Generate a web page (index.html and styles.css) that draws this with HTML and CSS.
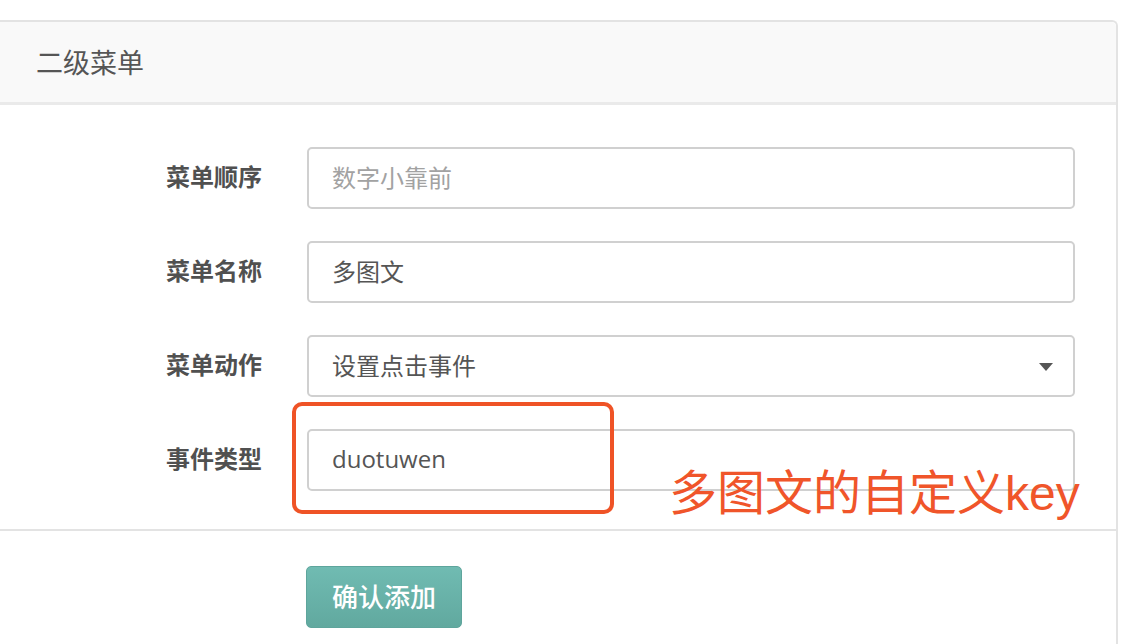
FILE: index.html
```html
<!DOCTYPE html>
<html lang="zh-CN">
<head>
<meta charset="utf-8">
<title>二级菜单</title>
<link rel="stylesheet" href="styles.css">
</head>
<body>
<div class="panel">
  <div class="panel-heading">二级菜单</div>
  <div class="panel-body">
    <div class="row">
      <label class="label">菜单顺序</label>
      <div class="control placeholder">数字小靠前</div>
    </div>
    <div class="row">
      <label class="label">菜单名称</label>
      <div class="control">多图文</div>
    </div>
    <div class="row">
      <label class="label">菜单动作</label>
      <div class="control select">设置点击事件<span class="caret"></span></div>
    </div>
    <div class="row">
      <label class="label">事件类型</label>
      <div class="control latin">duotuwen</div>
      <div class="highlight"></div>
      <div class="note">多图文的自定义<span class="note-latin">key</span></div>
    </div>
  </div>
  <div class="panel-footer">
    <button class="btn">确认添加</button>
  </div>
</div>
</body>
</html>
```
FILE: styles.css
```css
html, body {
  margin: 0;
  padding: 0;
  background: #ffffff;
}
body {
  font-family: "Noto Sans CJK SC", "Noto Sans", sans-serif;
  color: #555555;
  overflow: hidden;
  height: 644px;
}
.panel {
  margin: 20px 28px 0 -2px;
  border: 2px solid #e3e3e3;
  border-bottom: none;
  border-radius: 0 6px 0 0;
  height: 640px;
}
.panel-heading {
  height: 83px;
  box-sizing: border-box;
  padding-left: 36px;
  padding-bottom: 2px;
  display: flex;
  align-items: center;
  background: #f9f9f9;
  border-bottom: 3px solid #eaeaea;
  border-radius: 0 5px 0 0;
  font-size: 27px;
  color: #555555;
  line-height: 1;
}
.panel-body {
  padding: 42px 0 38px 0;
  display: flex;
  flex-direction: column;
  gap: 32px;
}
.row {
  position: relative;
  display: grid;
  grid-template-columns: 262px 768px;
  column-gap: 45px;
  align-items: center;
}
.label {
  text-align: right;
  font-weight: 700;
  font-size: 24px;
  color: #505050;
  line-height: 1;
  padding-bottom: 5px;
}
.control {
  height: 62px;
  box-sizing: border-box;
  border: 2px solid #d0d0d0;
  border-radius: 5px;
  padding: 0 23px 2px 23px;
  display: flex;
  align-items: center;
  font-size: 24px;
  color: #555555;
  line-height: 1;
  background: #fff;
}
.placeholder {
  color: #a2a2a2;
}
.latin {
  font-family: "Open Sans", "Noto Sans", sans-serif;
  font-size: 24px;
}
.select {
  position: relative;
}
.caret {
  position: absolute;
  right: 20px;
  top: 26px;
  width: 0;
  height: 0;
  border-left: 7px solid transparent;
  border-right: 7px solid transparent;
  border-top: 8px solid #555555;
}
.highlight {
  position: absolute;
  left: 292px;
  top: -27px;
  width: 322px;
  height: 112px;
  box-sizing: border-box;
  border: 4px solid #ef5326;
  border-radius: 10px;
}
.note {
  position: absolute;
  left: 669px;
  top: 36px;
  font-size: 48px;
  line-height: 1;
  color: #f0552a;
  white-space: nowrap;
}
.note-latin {
  font-family: "Liberation Sans", sans-serif;
}
.panel-footer {
  border-top: 2px solid #e3e3e3;
  padding: 35px 0 0 306px;
}
.btn {
  width: 156px;
  height: 62px;
  border: 1px solid #5ea59c;
  border-radius: 5px;
  background: linear-gradient(#70bbb2, #61a99f);
  color: #ffffff;
  font-family: "Noto Sans CJK SC", sans-serif;
  font-size: 26px;
  font-weight: 500;
  padding: 0 0 3px 0;
  line-height: 1;
}
```
